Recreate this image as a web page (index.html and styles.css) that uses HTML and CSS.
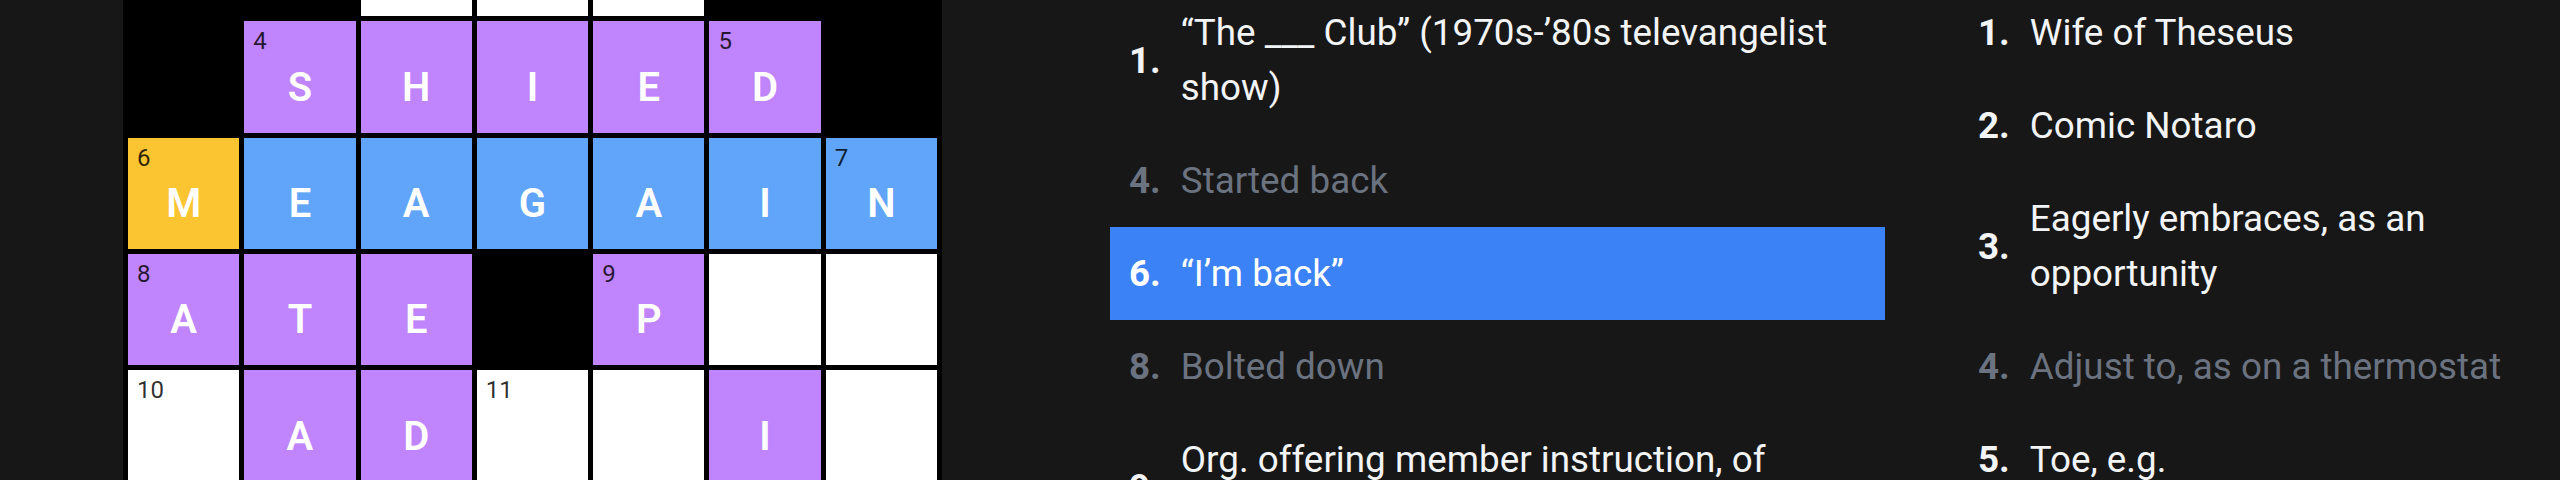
FILE: index.html
```html
<!DOCTYPE html>
<html lang="en">
<head>
<meta charset="utf-8">
<title>Crossword</title>
<link rel="stylesheet" href="styles.css">
</head>
<body>
<main class="page">
  <section class="board">
    <div class="cell block"></div>
    <div class="cell block"></div>
    <div class="cell open"></div>
    <div class="cell open"></div>
    <div class="cell open"></div>
    <div class="cell block"></div>
    <div class="cell block"></div>

    <div class="cell block"></div>
    <div class="cell word"><span class="num">4</span>S</div>
    <div class="cell word">H</div>
    <div class="cell word">I</div>
    <div class="cell word">E</div>
    <div class="cell word"><span class="num">5</span>D</div>
    <div class="cell block"></div>

    <div class="cell current"><span class="num">6</span>M</div>
    <div class="cell selected">E</div>
    <div class="cell selected">A</div>
    <div class="cell selected">G</div>
    <div class="cell selected">A</div>
    <div class="cell selected">I</div>
    <div class="cell selected"><span class="num">7</span>N</div>

    <div class="cell word"><span class="num">8</span>A</div>
    <div class="cell word">T</div>
    <div class="cell word">E</div>
    <div class="cell block"></div>
    <div class="cell word"><span class="num">9</span>P</div>
    <div class="cell open"></div>
    <div class="cell open"></div>

    <div class="cell open"><span class="num">10</span></div>
    <div class="cell word">A</div>
    <div class="cell word">D</div>
    <div class="cell open"><span class="num">11</span></div>
    <div class="cell open"></div>
    <div class="cell word">I</div>
    <div class="cell open"></div>
  </section>

  <section class="clues">
    <ol class="clue-list across">
      <li class="clue"><span class="clue-num">1.</span><span class="clue-text">“The ___ Club” (1970s-’80s televangelist show)</span></li>
      <li class="clue done"><span class="clue-num">4.</span><span class="clue-text">Started back</span></li>
      <li class="clue active"><span class="clue-num">6.</span><span class="clue-text">“I’m back”</span></li>
      <li class="clue done"><span class="clue-num">8.</span><span class="clue-text">Bolted down</span></li>
      <li class="clue"><span class="clue-num">9.</span><span class="clue-text">Org. offering member instruction, of course?</span></li>
    </ol>
    <ol class="clue-list down">
      <li class="clue"><span class="clue-num">1.</span><span class="clue-text">Wife of Theseus</span></li>
      <li class="clue"><span class="clue-num">2.</span><span class="clue-text">Comic Notaro</span></li>
      <li class="clue"><span class="clue-num">3.</span><span class="clue-text">Eagerly embraces, as an opportunity</span></li>
      <li class="clue done"><span class="clue-num">4.</span><span class="clue-text">Adjust to, as on a thermostat</span></li>
      <li class="clue"><span class="clue-num">5.</span><span class="clue-text">Toe, e.g.</span></li>
    </ol>
  </section>
</main>
</body>
</html>
```

FILE: styles.css
```css
html, body {
  margin: 0;
  padding: 0;
  background: #171717;
  overflow: hidden;
}

body {
  font-family: Roboto, "Noto Sans", sans-serif;
  color: #f3f4f6;
}

.page {
  display: flex;
  align-items: flex-start;
  margin-top: -100px;
  padding-left: 123px;
}

.board {
  flex: none;
  width: 819px;
  box-sizing: border-box;
  display: grid;
  grid-template-columns: repeat(7, 1fr);
  grid-auto-rows: 111.3px;
  gap: 5px;
  padding: 5px;
  background: #000;
}

.cell {
  position: relative;
  box-sizing: border-box;
  display: flex;
  align-items: center;
  justify-content: center;
  padding-top: 22px;
  font-size: 40px;
  font-weight: 600;
  line-height: 1.362;
  color: #fff;
}

.cell.block { background: #000; }
.cell.open { background: #fff; }
.cell.word { background: #c084fc; }
.cell.selected { background: #60a5fa; }
.cell.current { background: #fbc531; }

.num {
  position: absolute;
  top: 4px;
  left: 9px;
  font-size: 24px;
  font-weight: 400;
  line-height: 1.362;
  color: rgba(0, 0, 0, 0.82);
}

.clues {
  flex: 1;
  display: flex;
  align-items: flex-start;
  gap: 74px;
  margin-left: 168px;
  padding-top: 86px;
  padding-right: 8px;
}

.clue-list {
  list-style: none;
  margin: 0;
  padding: 0;
  font-size: 36.8px;
  line-height: 55px;
}

.across {
  flex: none;
  width: 775px;
}

.down {
  flex: 1;
  min-width: 0;
}

.clue {
  display: flex;
  align-items: center;
  gap: 20px;
  padding: 19px;
  color: #f3f4f6;
}

.clue.done { color: #6b7280; }

.clue.active {
  background: #3b82f6;
  color: #fff;
}

.clue-num {
  flex: none;
  font-weight: 700;
}
```
